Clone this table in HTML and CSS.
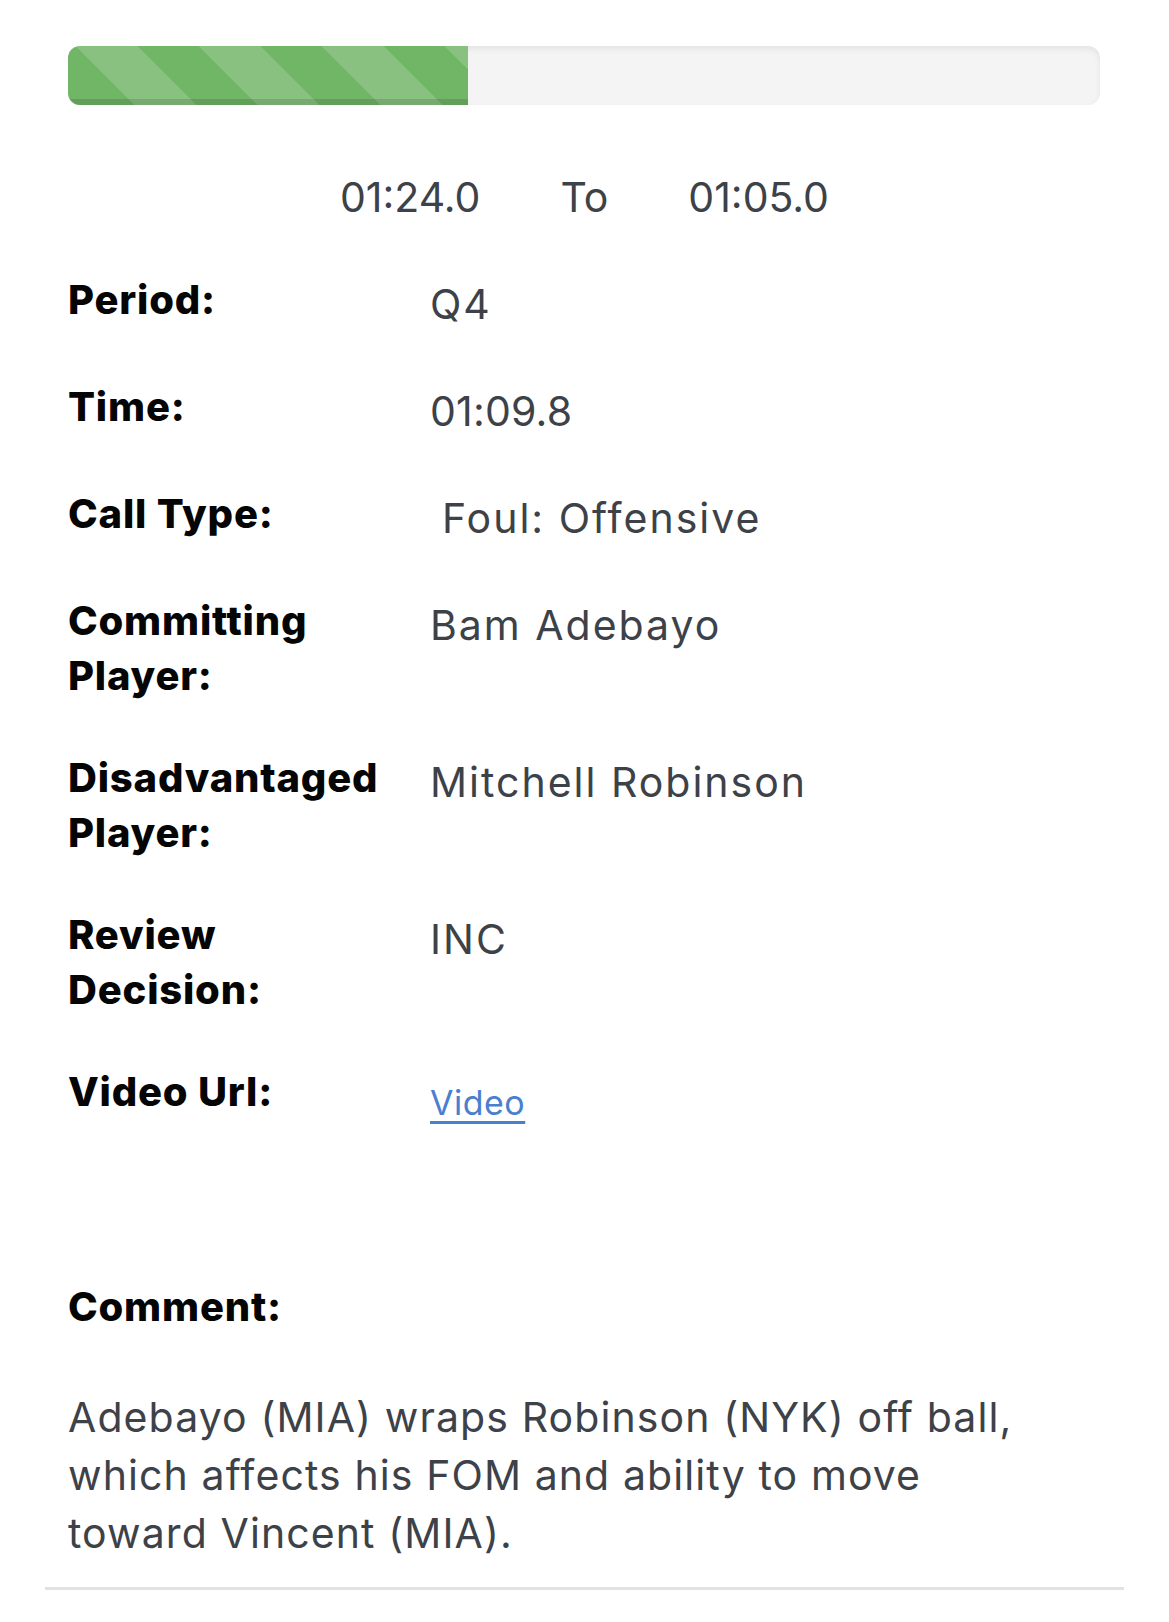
FILE: index.html
```html
<!DOCTYPE html>
<html lang="en">
<head>
<meta charset="utf-8">
<title>Play Review</title>
<link rel="stylesheet" href="styles.css">
</head>
<body>
<main class="page">
  <div class="progress">
    <div class="progress-bar" style="width: 38.8%"></div>
  </div>

  <div class="range">
    <span>01:24.0</span>
    <span>To</span>
    <span>01:05.0</span>
  </div>

  <dl class="details">
    <dt class="label">Period:</dt>
    <dd class="value">Q4</dd>

    <dt class="label">Time:</dt>
    <dd class="value value-digits">01:09.8</dd>

    <dt class="label">Call Type:</dt>
    <dd class="value value-indent">Foul: Offensive</dd>

    <dt class="label">Committing<br>Player:</dt>
    <dd class="value">Bam Adebayo</dd>

    <dt class="label">Disadvantaged<br>Player:</dt>
    <dd class="value">Mitchell Robinson</dd>

    <dt class="label">Review<br>Decision:</dt>
    <dd class="value">INC</dd>

    <dt class="label">Video Url:</dt>
    <dd class="value"><a class="video-link" href="#">Video</a></dd>
  </dl>

  <section class="comment">
    <h3 class="comment-label">Comment:</h3>
    <p class="comment-text">Adebayo (MIA) wraps Robinson (NYK) off ball, which affects his FOM and ability to move toward Vincent (MIA).</p>
  </section>

  <hr class="rule">
</main>
</body>
</html>
```

FILE: styles.css
```css
html, body {
  margin: 0;
  padding: 0;
  background: #ffffff;
}

body {
  font-family: Inter, "Open Sans", "Liberation Sans", sans-serif;
  color: #3d4148;
}

.page {
  width: 1169px;
  padding-top: 46px;
  box-sizing: border-box;
}

.progress {
  margin: 0 69px 0 68px;
  height: 59px;
  border-radius: 12px;
  background: #f4f4f4;
  box-shadow: inset 0 3px 6px rgba(0, 0, 0, 0.07);
  overflow: hidden;
  display: flex;
}

.progress-bar {
  height: 100%;
  background-color: #71b567;
  background-image: linear-gradient(45deg,
    rgba(255, 255, 255, 0.17) 25%, transparent 25%,
    transparent 50%, rgba(255, 255, 255, 0.17) 50%,
    rgba(255, 255, 255, 0.17) 75%, transparent 75%, transparent);
  background-size: 123px 123px;
  background-position: 8px 0;
  box-shadow: inset 0 -6px 0 rgba(0, 0, 0, 0.12);
}

.range {
  display: flex;
  justify-content: center;
  gap: 80px;
  margin-top: 64px;
  font-size: 41px;
  line-height: 56px;
  color: #3d4148;
}

.details {
  display: grid;
  grid-template-columns: 362px 1fr;
  row-gap: 47px;
  margin: 47px 0 0 68px;
  padding: 0;
}

.label {
  margin: 0;
  font-weight: 800;
  font-size: 40px;
  line-height: 55px;
  color: #050505;
  letter-spacing: 0.8px;
}

.value {
  margin: 0;
  padding-top: 5px;
  font-size: 41px;
  line-height: 55px;
  color: #3d4148;
  letter-spacing: 2px;
}

.value-digits {
  letter-spacing: 0.2px;
}

.value-indent {
  padding-left: 12px;
}

.video-link {
  display: inline-block;
  padding-top: 6px;
  font-size: 34px;
  letter-spacing: 0.5px;
  color: #4a7fd0;
  text-decoration: underline;
  text-decoration-thickness: 3px;
  text-underline-offset: 6px;
}

.comment {
  margin: 149px 0 0 68px;
}

.comment-label {
  margin: 0;
  font-weight: 800;
  font-size: 40px;
  line-height: 55px;
  color: #050505;
  letter-spacing: 0.8px;
}

.comment-text {
  margin: 54px 0 0 0;
  max-width: 990px;
  font-size: 41px;
  line-height: 58px;
  letter-spacing: 1.1px;
  color: #3d4148;
}

.rule {
  margin: 25px 45px 0 45px;
  border: 0;
  height: 3px;
  background: #e2e2e2;
}
```
